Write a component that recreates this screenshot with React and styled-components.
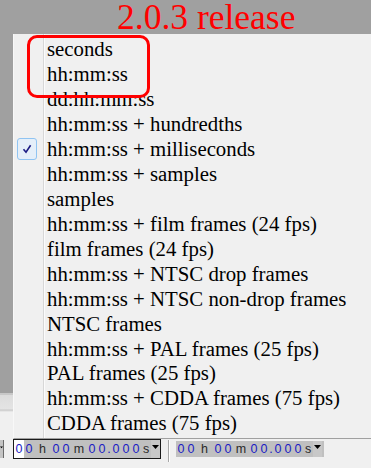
import React from "react";
import styled, { createGlobalStyle } from "styled-components";

const Global = createGlobalStyle`
  html, body { margin: 0; padding: 0; background: #f0f0f0; }
  body { width: 371px; height: 468px; overflow: hidden; }
`;

const Screen = styled.div`
  position: relative;
  width: 371px;
  height: 468px;
  display: flex;
  flex-direction: column;
  background: #f0f0f0;
  overflow: hidden;
`;

const TitleBar = styled.div`
  height: 34px;
  box-sizing: border-box;
  padding: 1px 0 0 117px;
  background: #a0a0a0;
  font-family: "Liberation Serif", "Times New Roman", serif;
  font-size: 35.5px;
  line-height: 33px;
  color: #ff0000;
  white-space: nowrap;
`;

const Middle = styled.div`
  display: flex;
  height: 405px;
`;

const LeftStrip = styled.div`
  width: 13px;
  display: flex;
  flex-direction: column;
`;

const StripTop = styled.div`
  flex: 1;
  background: #a0a0a0;
`;

const StripBottom = styled.div`
  height: 46px;
  box-sizing: border-box;
  border-top: 2px solid #c8c8c8;
  background: linear-gradient(#dcdcdc 0px, #e4e4e4 14px, #c8c8c8 15px, #f0f0f0 17px);
`;

const Menu = styled.div`
  flex: 1;
  box-sizing: border-box;
  border-left: 1px solid #f8f8f8;
  border-bottom: 1px solid #a0a0a0;
  padding-top: 3px;
  background:
    linear-gradient(90deg, transparent 29px, #d7d7d7 29px, #d7d7d7 30px, #fbfbfb 30px, #fbfbfb 31px, transparent 31px),
    #f0f0f0;
  background-repeat: no-repeat;
  display: flex;
  flex-direction: column;
`;

const Item = styled.div`
  display: flex;
  align-items: center;
  height: 24.93px;
  font-family: "Liberation Serif", "Times New Roman", serif;
  font-size: 20.8px;
  color: #000;
  white-space: nowrap;
`;

const CheckCell = styled.div`
  width: 29px;
  flex: none;
  height: 100%;
  display: flex;
  align-items: center;
`;

const CheckBox = styled.div`
  margin-left: 3px;
  width: 20px;
  height: 22px;
  box-sizing: border-box;
  border: 1px solid #90c4f2;
  border-radius: 3px;
  background: #e5eff9;
  display: flex;
  align-items: center;
  justify-content: center;
`;

const Label = styled.span`
  padding-left: 4px;
`;

const Toolbar = styled.div`
  flex: 1;
  display: flex;
  align-items: flex-start;
  background: #f0f0f0;
`;

const Stub = styled.div`
  width: 4px;
  height: 18px;
  margin-top: 1px;
  box-sizing: border-box;
  border-right: 1px solid #6a6a6a;
  background: #c4c4c4;
  overflow: hidden;
  display: flex;
  align-items: center;
  justify-content: flex-end;
`;

const TimeBox = styled.div`
  display: flex;
  align-items: stretch;
  width: 148px;
  height: ${(p) => (p.$focused ? "20px" : "16px")};
  margin-top: ${(p) => (p.$focused ? "0" : "2px")};
  margin-left: ${(p) => p.$ml}px;
  box-sizing: border-box;
  border: ${(p) => (p.$focused ? "1px solid #1a1a1a" : "none")};
  background: #c0c0c0;
  font-family: "Liberation Sans", Arial, sans-serif;
  font-size: 12.5px;
  line-height: 1;
`;

const Cell = styled.span`
  display: inline-flex;
  align-items: center;
  justify-content: center;
  width: ${(p) => p.$w}px;
  flex: none;
  color: ${(p) => (p.$unit ? "#2a2a2a" : "#1a1ac4")};
  background: ${(p) => (p.$sel ? "#ffffff" : "transparent")};
`;

const Arrow = styled.span`
  width: 9px;
  flex: none;
  display: flex;
  align-items: center;
  justify-content: center;
  background: #c8c8c8;
`;

const Separator = styled.div`
  width: 1px;
  height: 22px;
  margin-left: 7px;
  margin-top: 1px;
  background: #a8a8a8;
  border-right: 1px solid #ffffff;
`;

const Annotation = styled.div`
  position: absolute;
  left: 27px;
  top: 35px;
  width: 123px;
  height: 63px;
  box-sizing: border-box;
  border: 3px solid #ff0000;
  border-radius: 10px;
  pointer-events: none;
`;

const items = [
  "seconds",
  "hh:mm:ss",
  "dd:hh:mm:ss",
  "hh:mm:ss + hundredths",
  "hh:mm:ss + milliseconds",
  "hh:mm:ss + samples",
  "samples",
  "hh:mm:ss + film frames (24 fps)",
  "film frames (24 fps)",
  "hh:mm:ss + NTSC drop frames",
  "hh:mm:ss + NTSC non-drop frames",
  "NTSC frames",
  "hh:mm:ss + PAL frames (25 fps)",
  "PAL frames (25 fps)",
  "hh:mm:ss + CDDA frames (75 fps)",
  "CDDA frames (75 fps)",
];

const Check = () => (
  <svg width="10" height="10" viewBox="0 0 10 10">
    <path d="M1.5 5.2 L4 8.2 L8.6 1.2" fill="none" stroke="#1c1c84" strokeWidth="1.6" />
  </svg>
);

const Tri = () => (
  <svg width="7" height="5" viewBox="0 0 7 5" style={{ marginTop: -4 }}>
    <path d="M0 0 H7 L3.5 4 Z" fill="#000" />
  </svg>
);

const cells = [
  ["0", 10], ["0", 10], ["h", 17, true], ["0", 10], ["0", 10], ["m", 16, true],
  ["0", 10], ["0", 10], [".", 4], ["0", 10], ["0", 10], ["0", 10], ["s", 10, true],
];

const Time = ({ focused, ml }) => (
  <TimeBox $focused={focused} $ml={ml}>
    {cells.map(([c, w, unit], i) => (
      <Cell key={i} $w={w} $unit={unit} $sel={focused && i === 0}>
        {c}
      </Cell>
    ))}
    <Arrow>
      <Tri />
    </Arrow>
  </TimeBox>
);

export default function App() {
  return (
    <Screen>
      <Global />
      <TitleBar>2.0.3 release</TitleBar>
      <Middle>
        <LeftStrip>
          <StripTop />
          <StripBottom />
        </LeftStrip>
        <Menu>
          {items.map((t, i) => (
            <Item key={i}>
              <CheckCell>
                {i === 4 && (
                  <CheckBox>
                    <Check />
                  </CheckBox>
                )}
              </CheckCell>
              <Label>{t}</Label>
            </Item>
          ))}
        </Menu>
      </Middle>
      <Toolbar>
        <Stub>
          <Tri />
        </Stub>
        <Time focused ml={9} />
        <Separator />
        <Time ml={6} />
      </Toolbar>
      <Annotation />
    </Screen>
  );
}
